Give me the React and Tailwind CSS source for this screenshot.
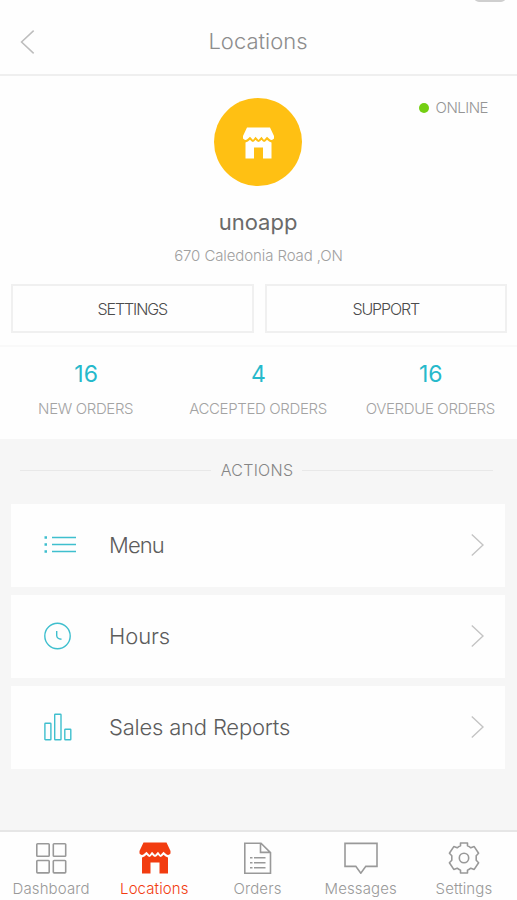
const stats = [
  { value: 16, label: "NEW ORDERS" },
  { value: 4, label: "ACCEPTED ORDERS" },
  { value: 16, label: "OVERDUE ORDERS" },
];

const actions = [
  { label: "Menu", Icon: ListIcon, spacing: "tracking-[-0.9px]" },
  { label: "Hours", Icon: ClockIcon, spacing: "tracking-[-0.1px]" },
  { label: "Sales and Reports", Icon: BarsIcon, spacing: "tracking-[-0.2px]" },
];

const tabs = [
  { label: "Dashboard", Icon: GridIcon },
  { label: "Locations", Icon: StoreIcon, active: true },
  { label: "Orders", Icon: DocumentIcon },
  { label: "Messages", Icon: MessageIcon },
  { label: "Settings", Icon: GearIcon },
];

function StoreIcon({ className = "h-8 w-8" }) {
  return (
    <svg className={className} viewBox="0 0 32 32" fill="currentColor">
      <path d="M4.5 0.5H27.5L31.5 9V11.5Q29.5 14 27 12L24.5 9.8L21.5 13L19 9.8L16 13L13 9.8L10.5 13L7.5 9.8L5 12Q2.5 14 0.5 11.5V9Z" />
      <path d="M3 15.5Q5.5 15 7.5 12.8Q10.5 17 13 12.8Q16 17 19 12.8Q21.5 17 24.5 12.8Q26.5 15 29 15.5V31.5H20.5V20.5H11.5V31.5H3Z" />
    </svg>
  );
}

function ListIcon() {
  return (
    <svg className="h-8 w-8" viewBox="0 0 32 32" fill="none" stroke="currentColor" strokeWidth="1.6">
      <path d="M8 8.5H32M8 15.5H32M8 22.5H32" />
      <path d="M0.5 8.5H3M0.5 15.5H3M0.5 22.5H3" strokeWidth="2.5" />
    </svg>
  );
}

function ClockIcon() {
  return (
    <svg className="h-8 w-8" viewBox="0 0 32 32" fill="none" stroke="currentColor" strokeWidth="1.4">
      <circle cx="13.5" cy="16" r="12.7" />
      <path d="M12.7 11V15.5Q12.8 18.8 17.5 19.3" />
    </svg>
  );
}

function BarsIcon() {
  return (
    <svg className="h-8 w-8" viewBox="0 0 32 32" fill="none" stroke="currentColor" strokeWidth="1.4">
      <rect x="0.9" y="12.2" width="6" height="16.6" rx="0.6" />
      <rect x="10.7" y="3.2" width="6.3" height="25.6" rx="0.6" />
      <rect x="20.8" y="18.2" width="6" height="10.6" rx="0.6" />
    </svg>
  );
}

function GridIcon() {
  return (
    <svg className="h-8 w-8" viewBox="0 0 32 32" fill="none" stroke="currentColor" strokeWidth="1.6">
      <rect x="0.8" y="1.8" width="12.4" height="12.4" rx="0.8" />
      <rect x="17.3" y="1.8" width="12.4" height="12.4" rx="0.8" />
      <rect x="0.8" y="18.5" width="12.4" height="12.4" rx="0.8" />
      <rect x="17.3" y="18.5" width="12.4" height="12.4" rx="0.8" />
    </svg>
  );
}

function DocumentIcon() {
  return (
    <svg className="h-8 w-8" viewBox="0 0 32 32" fill="none" stroke="currentColor" strokeWidth="1.6">
      <path d="M2.8 1.2H19L28.5 10.7V31.2H2.8ZM18.5 1.2V10.4H28.5" />
      <path d="M12 15.7H23.5M12 20.7H23.5M12 25.7H23.5" />
      <path d="M8 15.7H10.5M8 20.7H10.5M8 25.7H10.5" />
    </svg>
  );
}

function MessageIcon() {
  return (
    <svg className="h-8 w-[34px]" viewBox="0 0 34 32" fill="none" stroke="currentColor" strokeWidth="1.6">
      <path d="M1 1.4H33V24.4H21.8L16.8 31.2L11.8 24.4H1Z" />
    </svg>
  );
}

function GearIcon() {
  return (
    <svg className="h-8 w-8" viewBox="0 0 32 32" fill="none" stroke="currentColor" strokeWidth="1.6" strokeLinejoin="round">
      <path d="M12.5 1H19.5V3.8Q21.3 4.5 22.8 5.8L26.2 4.6L30.6 11.3L28.2 13.8V18.2L30.6 20.7L26.2 27.4L22.8 26.2Q21.3 27.5 19.5 28.2V31H12.5V28.2Q10.7 27.5 9.2 26.2L5.8 27.4L1.4 20.7L3.8 18.2V13.8L1.4 11.3L5.8 4.6L9.2 5.8Q10.7 4.5 12.5 3.8Z" />
      <circle cx="16" cy="16" r="4.7" />
    </svg>
  );
}

function Chevron({ className }) {
  return (
    <svg className={className} viewBox="0 0 13 24" fill="none" stroke="currentColor" strokeWidth="1.4">
      <path d="M0.8 1.5L12 12L0.8 22.5" />
    </svg>
  );
}

function Header() {
  return (
    <header className="flex h-[76px] items-center justify-center border-b-2 border-[#efefef] pt-[9px]">
      <button className="w-[60px] pl-5 text-[#bdbdbd]">
        <Chevron className="h-[26px] w-[15px] rotate-180" />
      </button>
      <h1 className="flex-1 text-center text-[22px] font-light text-[#8d8d8d]">Locations</h1>
      <div className="w-[61px]" />
      <div className="absolute -top-2 left-[474px] h-[10px] w-8 rounded-md bg-[#cfcfcf]" />
    </header>
  );
}

function Profile() {
  return (
    <section className="relative flex h-[269px] flex-col items-center pt-[22px]">
      <div className="absolute top-[22px] right-[29px] flex items-center gap-[7px]">
        <span className="h-[10px] w-[10px] rounded-full bg-[#74cf12]" />
        <span className="text-[15px] leading-5 font-light tracking-[-0.5px] text-[#959595]">ONLINE</span>
      </div>
      <div className="mr-px flex h-[88px] w-[88px] items-center justify-center rounded-full bg-[#ffc013] text-white">
        <StoreIcon className="mt-[2px] h-8 w-[33px]" />
      </div>
      <h2 className="mt-5 mr-px text-[22px] leading-8 text-[#6a6a6a]">unoapp</h2>
      <p className="mt-2 text-[15px] leading-5 font-light tracking-[-0.1px] text-[#a0a0a0]">670 Caledonia Road ,ON</p>
      <div className="mt-[18px] flex w-full gap-[11px] pr-[10px] pl-[11px]">
        <button className="h-[49px] flex-1 border-2 border-[#f0f0f0] text-base font-light tracking-[-1.1px] text-[#4c4c4c]">SETTINGS</button>
        <button className="h-[49px] flex-1 border-2 border-[#f0f0f0] text-base font-light tracking-[-1.1px] text-[#4c4c4c]">SUPPORT</button>
      </div>
    </section>
  );
}

function Stats() {
  return (
    <section className="grid h-[94px] grid-cols-3 border-t-2 border-[#f9f9f9]">
      {stats.map(({ value, label }) => (
        <div key={label} className="flex flex-col items-center pt-[11px] whitespace-nowrap">
          <span className="text-[23px] leading-8 text-[#26b9cb]">{value}</span>
          <span className="mt-[9px] mr-px text-[15px] leading-5 font-light tracking-[-0.35px] text-[#a3a3a3]">{label}</span>
        </div>
      ))}
    </section>
  );
}

function Actions() {
  return (
    <section className="h-[392px] bg-[#f6f6f6] pt-[19px]">
      <div className="flex items-center gap-[9px] pr-6 pl-5">
        <span className="h-px flex-1 bg-[#e8e8e8]" />
        <h3 className="pl-px text-base leading-6 font-light tracking-[0.25px] text-[#858585]">ACTIONS</h3>
        <span className="h-px flex-1 bg-[#e8e8e8]" />
      </div>
      <ul className="mt-[22px] flex flex-col gap-2 pr-3 pl-[11px]">
        {actions.map(({ label, Icon, spacing }) => (
          <li key={label} className="flex h-[83px] items-center bg-[#fefefe] pr-[21px] pb-px pl-[33px]">
            <span className="w-[65px] text-[#3fbfce]">
              <Icon />
            </span>
            <span className={`flex-1 pt-px text-[22px] font-light text-[#5c5c5c] ${spacing}`}>{label}</span>
            <Chevron className="h-6 w-[13px] text-[#c4c4c4]" />
          </li>
        ))}
      </ul>
    </section>
  );
}

function TabBar() {
  return (
    <nav className="-mt-px flex h-[70px] border-t-2 border-[#e6e6e6] bg-[#fefefe] pt-[10px] pr-px">
      {tabs.map(({ label, Icon, active }) => (
        <a
          key={label}
          className={`flex flex-1 flex-col items-center ${active ? "text-[#f23c10]" : "text-[#999999]"}`}
        >
          <Icon />
          <span className="mt-[5px] mr-px text-[15px] leading-5 font-light tracking-[0.1px]">{label}</span>
        </a>
      ))}
    </nav>
  );
}

export default function App() {
  return (
    <main className="h-[900px] w-[517px] overflow-hidden bg-[#fefefe] font-['Inter',sans-serif]">
      <Header />
      <Profile />
      <Stats />
      <Actions />
      <TabBar />
    </main>
  );
}
